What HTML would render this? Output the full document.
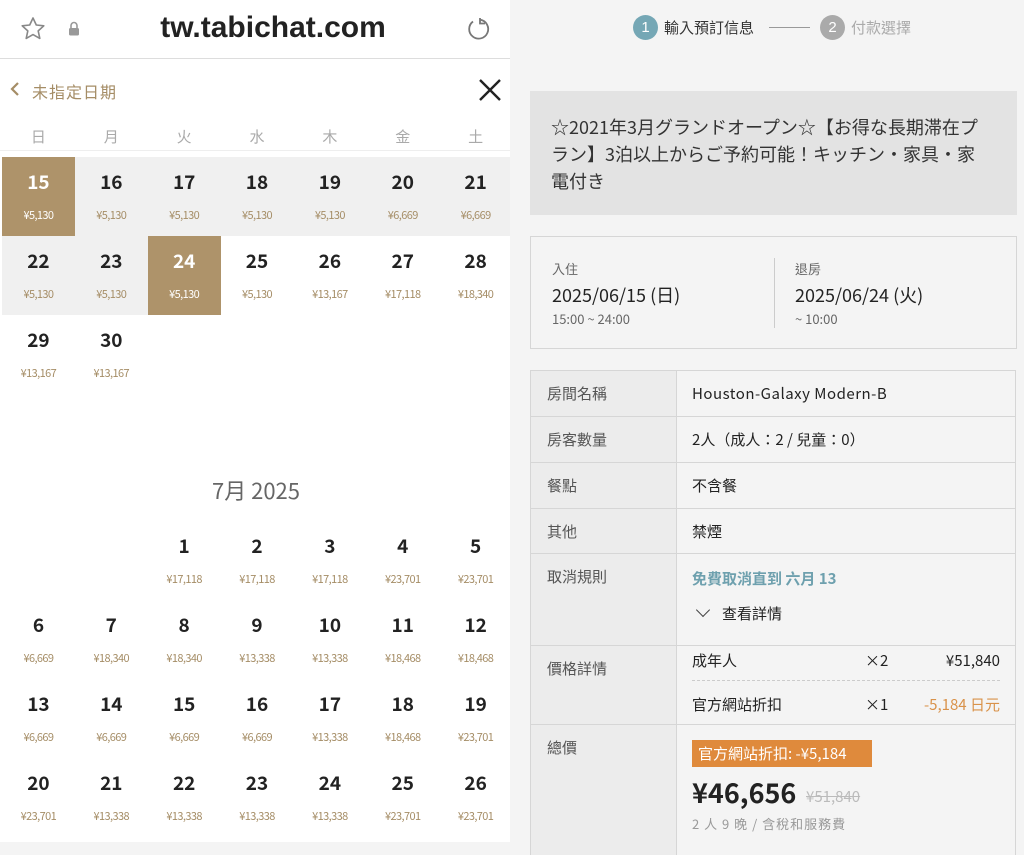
<!DOCTYPE html>
<html><head><meta charset="utf-8"><style>
*{margin:0;padding:0;box-sizing:border-box}
body{width:1024px;height:842px;overflow:hidden;background:#f4f4f4;font-family:"Liberation Sans","Noto Sans CJK TC",sans-serif;position:relative}
.abs{position:absolute}
#left{position:absolute;left:0;top:0;width:510px;height:842px;background:#fff;overflow:hidden}
.row{position:absolute;left:2px;width:510px;height:79px;display:flex}
.c{width:72.86px;height:79px;text-align:center;position:relative}
.c b{display:block;position:absolute;top:11px;left:0;right:0;font-size:19px;font-weight:600;color:#222;font-family:"Noto Sans CJK TC",sans-serif}
.c i{display:block;position:absolute;top:50px;left:0;right:0;font-size:11px;font-style:normal;color:#a58d66;letter-spacing:-.6px;font-family:"Noto Sans CJK TC",sans-serif}
.g{background:#f0f0f0}
.s{background:#ae936a}
.s b,.s i{color:#fff}
.wk{position:absolute;top:126px;left:2px;width:510px;display:flex;font-size:15px;color:#aaa;font-family:"Noto Sans CJK TC",sans-serif}
.wk span{width:72.86px;text-align:center}
.tb{position:absolute;left:530px;width:486px;border:1px solid #d6d6d6;border-bottom:none;font-family:"Noto Sans CJK TC",sans-serif}
.tr{display:flex;border-bottom:1px solid #d6d6d6}
.tl{width:146px;background:#ececec;border-right:1px solid #d6d6d6;padding:12px 0 0 16px;font-size:15px;color:#555}
.tv{flex:1;padding:12px 0 0 15px;font-size:15px;color:#222}
</style></head><body>
<div id="left">
 <div class="abs" style="left:0;top:58px;width:510px;height:1px;background:#ddd"></div>
 <svg class="abs" style="left:20px;top:16px" width="26" height="26" viewBox="0 0 26 26"><path d="M13 2l3.3 7 7.5.8-5.6 5.1 1.6 7.5L13 18.6l-6.8 3.8 1.6-7.5L2.2 9.8l7.5-.8z" fill="none" stroke="#888" stroke-width="1.6" stroke-linejoin="round"/></svg>
 <svg class="abs" style="left:68px;top:21px" width="12" height="15" viewBox="0 0 12 15"><path d="M3 7V4.5a3 3 0 0 1 6 0V7" fill="none" stroke="#999" stroke-width="1.6"/><rect x="1" y="7" width="10" height="7.5" rx="1.5" fill="#999"/></svg>
 <div class="abs" style="left:0;width:546px;top:11px;text-align:center;font-size:30px;font-weight:700;color:#222;font-family:'Liberation Sans',sans-serif">tw.tabichat.com</div>
 <svg class="abs" style="left:465px;top:16px" width="26" height="26" viewBox="0 0 26 26"><path d="M8 5.5A9.5 9.5 0 1 0 15 3.7" fill="none" stroke="#777" stroke-width="1.8"/><path d="M15 2v5.5h5" fill="none" stroke="#777" stroke-width="1.8"/></svg>
 <svg class="abs" style="left:8px;top:81px" width="14" height="16" viewBox="0 0 14 16"><path d="M10 2L4 8l6 6" fill="none" stroke="#a58d66" stroke-width="2.2"/></svg>
 <div class="abs" style="left:32px;top:79px;font-size:16px;color:#a58d66;letter-spacing:1px;font-family:'Noto Sans CJK TC',sans-serif">未指定日期</div>
 <svg class="abs" style="left:477px;top:77px" width="26" height="26" viewBox="0 0 26 26"><path d="M3 3l20 20M23 3L3 23" stroke="#222" stroke-width="2.4"/></svg>
 <div class="wk"><span>日</span><span>月</span><span>火</span><span>水</span><span>木</span><span>金</span><span>土</span></div>
 <div class="abs" style="left:0;top:150px;width:510px;height:1px;background:#eee"></div>
 <div class="row" style="top:157px"><div class="c s"><b>15</b><i>¥5,130</i></div><div class="c g"><b>16</b><i>¥5,130</i></div><div class="c g"><b>17</b><i>¥5,130</i></div><div class="c g"><b>18</b><i>¥5,130</i></div><div class="c g"><b>19</b><i>¥5,130</i></div><div class="c g"><b>20</b><i>¥6,669</i></div><div class="c g"><b>21</b><i>¥6,669</i></div></div>
 <div class="row" style="top:236px"><div class="c g"><b>22</b><i>¥5,130</i></div><div class="c g"><b>23</b><i>¥5,130</i></div><div class="c s"><b>24</b><i>¥5,130</i></div><div class="c"><b>25</b><i>¥5,130</i></div><div class="c"><b>26</b><i>¥13,167</i></div><div class="c"><b>27</b><i>¥17,118</i></div><div class="c"><b>28</b><i>¥18,340</i></div></div>
 <div class="row" style="top:315px"><div class="c"><b>29</b><i>¥13,167</i></div><div class="c"><b>30</b><i>¥13,167</i></div></div>
 <div class="abs" style="left:0;width:512px;top:474px;text-align:center;font-size:22px;color:#666;font-family:'Noto Sans CJK TC',sans-serif">7月 2025</div>
 <div class="row" style="top:521px"><div class="c"></div><div class="c"></div><div class="c"><b>1</b><i>¥17,118</i></div><div class="c"><b>2</b><i>¥17,118</i></div><div class="c"><b>3</b><i>¥17,118</i></div><div class="c"><b>4</b><i>¥23,701</i></div><div class="c"><b>5</b><i>¥23,701</i></div></div>
 <div class="row" style="top:600px"><div class="c"><b>6</b><i>¥6,669</i></div><div class="c"><b>7</b><i>¥18,340</i></div><div class="c"><b>8</b><i>¥18,340</i></div><div class="c"><b>9</b><i>¥13,338</i></div><div class="c"><b>10</b><i>¥13,338</i></div><div class="c"><b>11</b><i>¥18,468</i></div><div class="c"><b>12</b><i>¥18,468</i></div></div>
 <div class="row" style="top:679px"><div class="c"><b>13</b><i>¥6,669</i></div><div class="c"><b>14</b><i>¥6,669</i></div><div class="c"><b>15</b><i>¥6,669</i></div><div class="c"><b>16</b><i>¥6,669</i></div><div class="c"><b>17</b><i>¥13,338</i></div><div class="c"><b>18</b><i>¥18,468</i></div><div class="c"><b>19</b><i>¥23,701</i></div></div>
 <div class="row" style="top:758px"><div class="c"><b>20</b><i>¥23,701</i></div><div class="c"><b>21</b><i>¥13,338</i></div><div class="c"><b>22</b><i>¥13,338</i></div><div class="c"><b>23</b><i>¥13,338</i></div><div class="c"><b>24</b><i>¥13,338</i></div><div class="c"><b>25</b><i>¥23,701</i></div><div class="c"><b>26</b><i>¥23,701</i></div></div>
</div>

<div class="abs" style="left:633px;top:15px;width:25px;height:25px;border-radius:50%;background:#75a7b5;color:#fff;font-size:15px;text-align:center;line-height:25px">1</div>
<div class="abs" style="left:664px;top:17px;font-size:15px;color:#333;font-family:'Noto Sans CJK TC',sans-serif">輸入預訂信息</div>
<div class="abs" style="left:769px;top:27px;width:41px;height:1px;background:#999"></div>
<div class="abs" style="left:820px;top:15px;width:25px;height:25px;border-radius:50%;background:#aaa;color:#fff;font-size:15px;text-align:center;line-height:25px">2</div>
<div class="abs" style="left:851px;top:17px;font-size:15px;color:#aaa;font-family:'Noto Sans CJK TC',sans-serif">付款選擇</div>

<div class="abs" style="left:530px;top:91px;width:487px;height:124px;background:#e3e3e3;padding:23px 30px 0 21px;font-size:18px;line-height:27px;color:#333;font-family:'Noto Sans CJK JP',sans-serif">☆2021年3月グランドオープン☆【お得な長期滞在プラン】3泊以上からご予約可能！キッチン・家具・家電付き</div>

<div class="abs" style="left:530px;top:236px;width:487px;height:113px;border:1px solid #d6d6d6;font-family:'Noto Sans CJK TC',sans-serif">
 <div class="abs" style="left:21px;top:22px;font-size:13px;color:#666">入住</div>
 <div class="abs" style="left:21px;top:45px;font-size:18px;color:#222">2025/06/15 (日)</div>
 <div class="abs" style="left:21px;top:72px;font-size:13px;color:#666">15:00 ~ 24:00</div>
 <div class="abs" style="left:243px;top:21px;width:1px;height:70px;background:#ccc"></div>
 <div class="abs" style="left:264px;top:22px;font-size:13px;color:#666">退房</div>
 <div class="abs" style="left:264px;top:45px;font-size:18px;color:#222">2025/06/24 (火)</div>
 <div class="abs" style="left:264px;top:72px;font-size:13px;color:#666">~ 10:00</div>
</div>

<div class="tb" style="top:370px">
 <div class="tr" style="height:46px"><div class="tl">房間名稱</div><div class="tv" style="letter-spacing:.5px">Houston-Galaxy Modern-B</div></div>
 <div class="tr" style="height:46px"><div class="tl">房客數量</div><div class="tv">2人（成人：2 / 兒童：0）</div></div>
 <div class="tr" style="height:46px"><div class="tl">餐點</div><div class="tv">不含餐</div></div>
 <div class="tr" style="height:45px"><div class="tl">其他</div><div class="tv">禁煙</div></div>
 <div class="tr" style="height:92px"><div class="tl">取消規則</div><div class="tv" style="padding-top:14px"><div style="color:#6ea0ae;font-weight:600">免費取消直到 六月 13</div><div style="margin-top:14px;padding-left:2px"><span style="display:inline-block;width:10px;height:10px;border-right:1.5px solid #444;border-bottom:1.5px solid #444;transform:rotate(45deg);margin:0 14px 4px 4px"></span>查看詳情</div></div></div>
 <div class="tr" style="height:79px"><div class="tl">價格詳情</div><div class="tv" style="padding:0 15px;position:relative">
   <div class="abs" style="left:15px;top:4px">成年人</div><div class="abs" style="left:188px;top:4px">×2</div><div class="abs" style="right:15px;top:4px">¥51,840</div>
   <div class="abs" style="left:15px;right:15px;top:34px;border-top:1px dashed #ccc"></div>
   <div class="abs" style="left:15px;top:48px">官方網站折扣</div><div class="abs" style="left:188px;top:48px">×1</div><div class="abs" style="right:15px;top:48px;color:#d9924a">-5,184 日元</div>
 </div></div>
 <div class="tr" style="height:130px;border:none"><div class="tl">總價</div><div class="tv" style="position:relative">
   <div class="abs" style="left:15px;top:15px;background:#df8a3c;color:#fff;padding:0 6px;height:27px;line-height:27px;font-size:15px;width:180px">官方網站折扣: -¥5,184</div>
   <div class="abs" style="left:15px;top:47px;font-size:27px;font-weight:700;color:#222">¥46,656</div>
   <div class="abs" style="left:129px;top:61px;font-size:15px;color:#bbb;text-decoration:line-through">¥51,840</div>
   <div class="abs" style="left:15px;top:89px;font-size:13px;color:#999;letter-spacing:1px">2 人 9 晚 / 含稅和服務費</div>
 </div></div>
</div>
</body></html>
